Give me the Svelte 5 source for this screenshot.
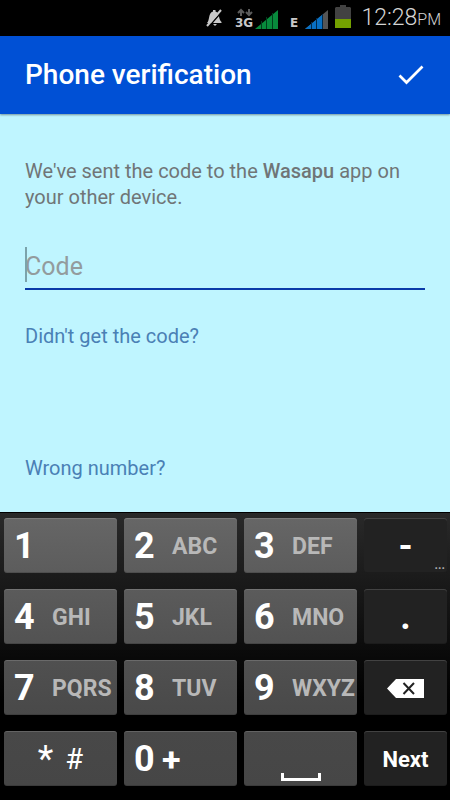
<script>
  const rows = [
    [{ d: '1', l: '' }, { d: '2', l: 'ABC' }, { d: '3', l: 'DEF' }, { kind: 'dash' }],
    [{ d: '4', l: 'GHI' }, { d: '5', l: 'JKL' }, { d: '6', l: 'MNO' }, { kind: 'dot' }],
    [{ d: '7', l: 'PQRS' }, { d: '8', l: 'TUV' }, { d: '9', l: 'WXYZ' }, { kind: 'delete' }],
    [{ kind: 'symbols' }, { d: '0', plus: true }, { kind: 'space' }, { kind: 'next' }]
  ];
  const shades = [
    ['#666666', '#5c5c5c'],
    ['#5b5b5b', '#525252'],
    ['#505050', '#494949'],
    ['#484848', '#464646']
  ];
  let code = $state('');

  function press(key) {
    if (key.d) code += key.d;
    else if (key.kind === 'dash') code += '-';
    else if (key.kind === 'dot') code += '.';
    else if (key.kind === 'delete') code = code.slice(0, -1);
  }
</script>

<div class="screen">
  <div class="status">
    <svg class="mute" width="18" height="18" viewBox="0 0 18 18" aria-label="Silent">
      <path d="M2 14C5 11 3 4 8 2.500V1H10.500V2.500C15 4 13 10 16.500 13V14Z M8 15H12L10 17Z" fill="#c8c8c8" />
      <path d="M17 2.500L3.500 18" stroke="#000" stroke-width="1.500" />
      <path d="M16 1L2 17" stroke="#c8c8c8" stroke-width="2" />
    </svg>
    <svg class="net" width="44" height="24" viewBox="0 0 44 24" aria-label="3G signal">
      <path d="M6 11V5M3 8L6 5L9 8M14 4V10M11 7L14 10L17 7" fill="none" stroke="#5c5c5c" stroke-width="2" />
      <text x="0" y="22" class="badge">3G</text>
      <path d="M20 24L43 5V24Z" fill="#088a3c" />
      <path d="M26.500 16V24M31.500 12V24M37.500 8V24" stroke="#003d1b" stroke-width="1" />
    </svg>
    <svg class="edge" width="38" height="24" viewBox="0 0 38 24" aria-label="Edge signal">
      <text x="0" y="22" class="badge">E</text>
      <path d="M15 24L38 5V24Z" fill="#555" />
      <path d="M15 24L32 10V24Z" fill="#0870c4" />
      <path d="M21.500 17V24M26.500 13V24M32.500 9V24" stroke="#002a4d" stroke-width="1" />
    </svg>
    <svg class="battery" width="16" height="24" viewBox="0 0 16 24" aria-label="Battery">
      <path d="M5 0H11V2H15L16 3V23H0V3L1 2H5Z" fill="#424242" />
      <path d="M0 14H16V23H0Z" fill="#74a000" />
    </svg>
    <span class="time">12:28<small>PM</small></span>
  </div>

  <header>
    <h1>Phone verification</h1>
    <button class="done" aria-label="Done">
      <svg width="28" height="24" viewBox="0 0 28 24">
        <path d="M2.500 12.500L9.500 19.500L25.500 3.500" fill="none" stroke="#fff" stroke-width="2.700" />
      </svg>
    </button>
  </header>

  <main>
    <p>We've sent the code to the <b>Wasapu</b> app on your other device.</p>
    <div class="field">
      <input type="text" inputmode="numeric" aria-label="Code" placeholder="Code" bind:value={code} />
      {#if !code}<span class="caret"></span>{/if}
    </div>
    <a class="resend" href="#resend">Didn't get the code?</a>
    <a class="wrong" href="#number">Wrong number?</a>
  </main>

  <div class="keyboard">
    {#each rows as row, r}
      <div class="row">
        {#each row as key, c}
          <button
            class="key {key.kind ?? 'digit'}"
            class:dark={c === 3}
            style:--top={shades[r][0]}
            style:--bottom={shades[r][1]}
            onclick={() => press(key)}
            aria-label={key.kind === 'delete' ? 'Delete' : key.kind === 'space' ? 'Space' : undefined}
          >
            {#if key.d}
              <span class="num">{key.d}</span>
              {#if key.plus}
                <span class="plus">+</span>
              {:else}
                <span class="letters">{key.l}</span>
              {/if}
            {:else if key.kind === 'dash'}
              <span>-</span><span class="more">...</span>
            {:else if key.kind === 'dot'}
              <span>.</span>
            {:else if key.kind === 'delete'}
              <svg width="37" height="19" viewBox="0 0 37 19">
                <path d="M0 9.500L9 0H37V19H9Z" fill="#fff" />
                <path d="M16.500 4L27 15M27 4L16.500 15" stroke="#222" stroke-width="2" />
              </svg>
            {:else if key.kind === 'symbols'}
              <span class="star">*</span><span class="hash">#</span>
            {:else if key.kind === 'space'}
              <svg width="40" height="8" viewBox="0 0 40 8">
                <path d="M1.500 0V6.500H38.500V0" fill="none" stroke="#fff" stroke-width="3" />
              </svg>
            {:else}
              <span>Next</span>
            {/if}
          </button>
        {/each}
      </div>
    {/each}
  </div>
</div>

<style>
  :global(body) {
    margin: 0;
    background: #000;
  }
  .screen {
    display: flex;
    flex-direction: column;
    min-height: 100vh;
    font-family: Roboto, "Liberation Sans", sans-serif;
    background: #bff5ff;
  }
  button {
    border: 0;
    padding: 0;
    font-family: inherit;
  }
  .status {
    display: flex;
    align-items: center;
    justify-content: flex-end;
    box-sizing: border-box;
    height: 36px;
    padding-right: 9px;
    background: #000;
  }
  .status svg { margin-bottom: 2px; }
  .status .mute {
    margin-right: 12px;
    margin-bottom: 0;
  }
  .net { margin-right: 11px; }
  .edge { margin-right: 7px; }
  .battery { margin-right: 10px; }
  .badge {
    font-family: "DejaVu Sans", sans-serif;
    font-size: 12px;
    font-weight: 700;
    fill: #c8c8c8;
  }
  .time {
    font-size: 23px;
    font-weight: 300;
    line-height: 36px;
    padding-top: 2px;
    color: #d4d4d4;
  }
  .time small { font-size: 16px; }
  header {
    display: flex;
    align-items: center;
    justify-content: space-between;
    height: 78px;
    padding: 0 25px;
    background: #0050d5;
    box-shadow: 0 1px 2px rgba(0, 0, 0, 0.4);
  }
  h1 {
    margin: 0;
    font-size: 28px;
    font-weight: 500;
    line-height: 36px;
    color: #fff;
  }
  .done {
    display: flex;
    background: none;
  }
  main {
    display: flex;
    flex: 1;
    flex-direction: column;
    align-items: flex-start;
    padding: 44px 25px 31px;
  }
  p {
    margin: 0;
    font-size: 20px;
    line-height: 26px;
    color: #707577;
  }
  b { font-weight: 500; }
  .field {
    position: relative;
    width: 100%;
    margin: 34px 0 33px;
  }
  input {
    display: block;
    box-sizing: border-box;
    width: 100%;
    height: 46px;
    padding: 0;
    border: 0;
    border-bottom: 2px solid #0a3aa8;
    border-radius: 0;
    outline: 0;
    background: none;
    font-family: inherit;
    font-size: 25px;
    color: #444;
  }
  input::placeholder {
    color: #939b9d;
    opacity: 1;
  }
  .caret {
    position: absolute;
    top: 3px;
    left: 0;
    width: 2px;
    height: 35px;
    background: #7ba3ab;
  }
  a {
    font-size: 20px;
    line-height: 26px;
    color: #4a80b5;
    text-decoration: none;
  }
  .wrong { margin-top: auto; }
  .keyboard {
    display: flex;
    flex-direction: column;
    gap: 16px;
    padding: 5px 3px 14px 4px;
    border-top: 1px solid #000;
    background: linear-gradient(#292929, #000 65%);
  }
  .row {
    display: grid;
    grid-template-columns: 113fr 113fr 113fr 83fr;
    gap: 7px;
  }
  .key {
    position: relative;
    display: flex;
    align-items: center;
    justify-content: center;
    box-sizing: border-box;
    min-width: 0;
    height: 55px;
    padding-top: 2px;
    overflow: hidden;
    border-radius: 3px;
    background: linear-gradient(var(--top), var(--bottom));
    box-shadow: inset 0 1px rgba(255, 255, 255, 0.15), inset 0 -1px rgba(0, 0, 0, 0.15);
    color: #fff;
    font-size: 36px;
    font-weight: 700;
    line-height: 53px;
  }
  .digit {
    justify-content: flex-start;
    padding-left: 10px;
  }
  .dark { background: #222; }
  .num { width: 38px; text-align: left; }
  .letters {
    font-size: 23px;
    color: #b8b8b8;
  }
  .plus { font-size: 34px; margin-left: -10px; }
  .more {
    position: absolute;
    right: 2px;
    bottom: 2px;
    font-size: 12px;
    line-height: 12px;
    color: #aaa;
  }
  .symbols {
    gap: 12px;
    font-weight: 400;
  }
  .star { font-size: 36px; }
  .hash { font-size: 29px; }
  .space {
    align-items: flex-end;
    padding-bottom: 5px;
  }
  .next { font-size: 22px; }
</style>
